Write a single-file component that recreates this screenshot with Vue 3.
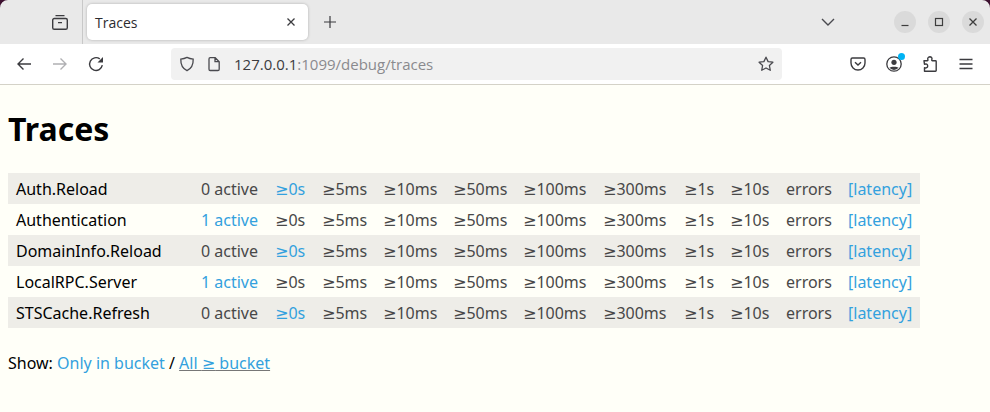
<script setup>
const buckets = ['5ms', '10ms', '50ms', '100ms', '300ms', '1s', '10s']
const colWidths = [185, 74, 47, 61, 70, 70, 80, 81, 46, 56, 62, 80]
const rows = [
  { name: 'Auth.Reload', active: false },
  { name: 'Authentication', active: true },
  { name: 'DomainInfo.Reload', active: false },
  { name: 'LocalRPC.Server', active: true },
  { name: 'STSCache.Refresh', active: false },
]
</script>

<template>
  <div class="window">
    <div class="tabbar">
      <span class="corner corner-left"></span>
      <span class="corner corner-right"></span>
      <div class="tab-left">
        <svg class="ico" viewBox="0 0 16 16" width="16" height="16">
          <path d="M3.500 1.600h9M2.300 4.500h11.400a1.600 1.600 0 0 1 1.600 1.600v7.600a1.600 1.600 0 0 1-1.600 1.600H2.300a1.600 1.600 0 0 1-1.600-1.600V6.100a1.600 1.600 0 0 1 1.600-1.600zM6 8.600h4" fill="none" stroke="#3b3b3f" stroke-width="1.400" />
        </svg>
      </div>
      <div class="tab">
        <span class="tab-title">Traces</span>
        <svg viewBox="0 0 10 10" width="10" height="10"><path d="M1.500 1.500l7 7M8.500 1.500l-7 7" stroke="#3b3b3f" stroke-width="1.300" /></svg>
      </div>
      <svg class="plus" viewBox="0 0 14 14" width="14" height="14"><path d="M7 1v12M1 7h12" stroke="#3b3b3f" stroke-width="1.200" /></svg>
      <svg class="chev" viewBox="0 0 14 8" width="14" height="8"><path d="M1 1l6 6 6-6" fill="none" stroke="#4a4a4f" stroke-width="1.400" /></svg>
      <div class="wctrls">
        <span class="wbtn"><svg viewBox="0 0 10 10" width="10" height="10"><path d="M1.500 8.500h7" stroke="#3d3d3d" stroke-width="1.200" /></svg></span>
        <span class="wbtn"><svg viewBox="0 0 10 10" width="10" height="10"><rect x="1.500" y="1.500" width="7" height="7" fill="none" stroke="#3d3d3d" stroke-width="1.200" /></svg></span>
        <span class="wbtn"><svg viewBox="0 0 10 10" width="10" height="10"><path d="M1.500 1.500l7 7M8.500 1.500l-7 7" stroke="#3d3d3d" stroke-width="1.300" /></svg></span>
      </div>
    </div>
    <div class="navbar">
      <svg class="nav-ico" viewBox="0 0 16 16" width="16" height="16"><path d="M15 8H1.800M7.500 2.500L2 8l5.500 5.500" fill="none" stroke="#3b3b3f" stroke-width="1.400" /></svg>
      <svg class="nav-ico" viewBox="0 0 16 16" width="16" height="16"><path d="M1 8h13.200M8.500 2.500L14 8l-5.500 5.500" fill="none" stroke="#b0b0b3" stroke-width="1.400" /></svg>
      <svg class="nav-ico" viewBox="0 0 16 16" width="16" height="16"><path d="M14.300 9.200A6.400 6.400 0 1 1 11.800 2.900" fill="none" stroke="#3b3b3f" stroke-width="1.400" /><path d="M15 1v5.500H9.500z" fill="#3b3b3f" /></svg>
      <div class="urlbar">
        <svg viewBox="0 0 16 16" width="16" height="16"><path d="M8 1.400c1.900 1 3.900 1.500 6.200 1.700.2 5.800-1.800 9.600-6.200 11.600-4.400-2-6.400-5.800-6.200-11.600C4.100 2.900 6.100 2.400 8 1.400z" fill="none" stroke="#4a4a4f" stroke-width="1.300" /></svg>
        <svg class="page" viewBox="0 0 14 16" width="14" height="16"><path d="M3.200 1.700h5l4 4v7.600a1.200 1.200 0 0 1-1.200 1.200H3.200A1.200 1.200 0 0 1 2 13.300V2.900a1.200 1.200 0 0 1 1.200-1.200zM8 1.700v4h4" fill="none" stroke="#4a4a4f" stroke-width="1.300" /></svg>
        <span class="url"><span class="host">127.0.0.1</span>:1099/debug/traces</span>
        <svg class="star" viewBox="0 0 16 16" width="16" height="16"><path d="M8 1.200l2.100 4.400 4.800.6-3.500 3.300.9 4.800L8 12l-4.300 2.300.9-4.800L1.100 6.200l4.800-.6z" fill="none" stroke="#4a4a4f" stroke-width="1.300" stroke-linejoin="round" /></svg>
      </div>
      <div class="tools">
        <svg viewBox="0 0 16 16" width="16" height="16"><path d="M2.400 2h11.200c.8 0 1.400.6 1.400 1.400V7a7 7 0 0 1-14 0V3.400C1 2.600 1.600 2 2.400 2zM5 6.200l3 2.800 3-2.800" fill="none" stroke="#3b3b3f" stroke-width="1.400" /></svg>
        <span class="account">
          <svg viewBox="0 0 16 16" width="16" height="16"><circle cx="8" cy="8" r="7.200" fill="none" stroke="#3b3b3f" stroke-width="1.300" /><circle cx="8" cy="6.300" r="2.600" fill="#3b3b3f" /><path d="M3.400 11.800c1-1.500 8.200-1.500 9.200 0a6 6 0 0 1-9.200 0z" fill="#3b3b3f" /></svg>
          <i class="dot"></i>
        </span>
        <svg viewBox="0 0 16 16" width="16" height="16"><path d="M2 4.800h3.300c.5 0 .8-.5.600-1-.6-1.400.3-3 1.900-3.100 1.700 0 2.600 1.700 2 3.100-.2.500.1 1 .6 1h3.100c.4 0 .7.300.7.700v9c0 .4-.3.700-.7.700H2.500v-3.500c1.500.7 3.200-.1 3.200-1.800S4 7.600 2.500 8.300z" fill="none" stroke="#3b3b3f" stroke-width="1.400" stroke-linejoin="round" /></svg>
        <svg viewBox="0 0 16 16" width="16" height="16"><path d="M1.500 3.500h13M1.500 8h13M1.500 12.500h13" stroke="#3b3b3f" stroke-width="1.300" /></svg>
      </div>
    </div>
    <main class="page-body">
      <h1>Traces</h1>
      <table>
        <colgroup>
          <col v-for="(w, i) in colWidths" :key="i" :width="w" />
        </colgroup>
        <tbody>
          <tr v-for="row in rows" :key="row.name">
            <td class="name">{{ row.name }}</td>
            <td :class="row.active ? 'link' : 'muted'">{{ row.active ? '1 active' : '0 active' }}</td>
            <td :class="row.active ? 'muted' : 'link'"><span class="ge">≥</span>0s</td>
            <td v-for="b in buckets" :key="b" class="muted"><span class="ge">≥</span>{{ b }}</td>
            <td class="muted">errors</td>
            <td class="link">[latency]</td>
          </tr>
        </tbody>
      </table>
      <p class="show">Show: <a class="link">Only in bucket</a> / <a class="link selected">All <span class="ge">≥</span> bucket</a></p>
    </main>
  </div>
</template>

<style>
html, body { margin: 0; background: #fffff8; }
</style>

<style scoped>
.window { width: 990px; height: 412px; overflow: hidden; background: #fffff8; }
.tabbar { height: 44px; background: #e9e9e9; display: flex; align-items: center; position: relative; }
.corner { position: absolute; top: 0; width: 8px; height: 8px; background: #3d1130; }
.corner-left { left: 0; clip-path: path('M0 0H8A8 8 0 0 0 0 8Z'); }
.corner-right { right: 0; clip-path: path('M0 0H8V8A8 8 0 0 0 0 0Z'); }
.tab-left { width: 83px; height: 44px; box-sizing: border-box; border-right: 1px solid #c8c8c8; display: flex; align-items: center; padding-left: 52px; }
.ico { display: block; }
.tab { margin-left: 4px; width: 221px; height: 36px; box-sizing: border-box; background: #fff; border-radius: 5px; box-shadow: 0 0 3px rgba(0,0,0,.25); display: flex; align-items: center; justify-content: space-between; padding: 0 8px; }
.tab-title { font: 14px "Open Sans", sans-serif; color: #2b2b30; }
.tab svg { margin-right: 4px; }
.plus { margin-left: 15px; }
.chev { margin-left: 484px; }
.wctrls { margin-left: auto; display: flex; gap: 12px; padding-right: 6px; }
.wbtn { width: 22px; height: 22px; border-radius: 50%; background: #dadada; display: flex; align-items: center; justify-content: center; }
.navbar { height: 41px; box-sizing: border-box; background: #fff; border-bottom: 1px solid #d4d2c8; display: flex; align-items: center; }
.nav-ico { flex: none; margin-left: 20px; }
.nav-ico:first-child { margin-left: 16px; }
.urlbar { margin-left: 67px; width: 611px; height: 32px; box-sizing: border-box; background: #f1f1f1; border-radius: 4px; display: flex; align-items: center; padding: 0 8px; }
.page { margin-left: 12px; }
.url { margin-left: 13px; font: 15px "Open Sans", sans-serif; color: #8a8a8e; }
.host { color: #3b3b3f; }
.star { margin-left: auto; }
.tools { margin-left: 68px; display: flex; align-items: center; gap: 20px; }
.account { position: relative; display: flex; }
.dot { position: absolute; top: -3px; right: -3px; width: 7px; height: 7px; border-radius: 50%; background: #00b3f4; }
.page-body { padding: 0 8px; font: 16px/22px "Noto Sans", sans-serif; color: #000; }
h1 { margin: 22px 0 22px; font: 700 32px/44px "Noto Sans", sans-serif; }
table { border-collapse: collapse; table-layout: fixed; width: 912px; }
tr:nth-child(odd) { background: #eeede8; }
td { height: 31px; padding: 0 0 0 8px; white-space: nowrap; }
.ge { font-family: "DejaVu Sans", sans-serif; line-height: 1; }
.muted { color: #484848; }
.link { color: #33a1de; }
.selected { text-decoration: underline; text-decoration-color: #777; }
.show { margin: 24px 0 0; }
</style>
